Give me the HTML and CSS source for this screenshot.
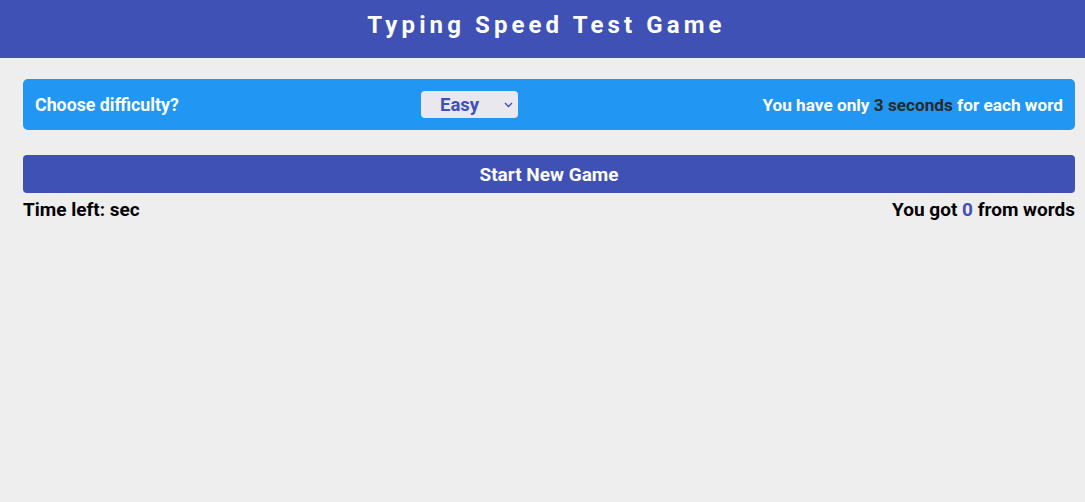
FILE: index.html
```html
<!DOCTYPE html>
<html>
<head>
<meta charset="utf-8">
<link rel="stylesheet" href="styles.css">
</head>
<body>
<header class="top">Typing Speed Test Game</header>
<main class="game">
  <div class="settings">
    <span class="label">Choose difficulty?</span>
    <select class="level">
      <option>Easy</option>
      <option>Normal</option>
      <option>Hard</option>
    </select>
    <span class="message">You have only <span class="secs">3 seconds</span> for each word</span>
  </div>
  <button class="start">Start New Game</button>
  <div class="status">
    <span class="time">Time left: sec</span>
    <span class="score">You got <span class="got">0</span> from words</span>
  </div>
</main>
</body>
</html>
```
FILE: styles.css
```css
* { box-sizing: border-box; }
body {
  margin: 0;
  background: #eeeeee;
  font-family: Roboto, "Liberation Sans", sans-serif;
  font-weight: 700;
}
.top {
  background: #3f51b5;
  color: #fff;
  height: 58px;
  display: flex;
  align-items: center;
  justify-content: center;
  font-size: 24px;
  letter-spacing: 4.1px;
  padding: 0 0 8px 8px;
}
.game {
  padding: 21px 10px 0 23px;
}
.settings {
  background: #2196f3;
  color: #fff;
  border-radius: 5px;
  height: 51px;
  padding: 0 12px;
  display: flex;
  align-items: center;
  justify-content: space-between;
  font-size: 17.2px;
}
.label { font-size: 17.8px; }
.level {
  -webkit-appearance: none;
  appearance: none;
  width: 97px;
  height: 27px;
  border: none;
  border-radius: 4px;
  background: #e8e8ee url("data:image/svg+xml,%3Csvg xmlns='http://www.w3.org/2000/svg' width='9' height='6' viewBox='0 0 9 6'%3E%3Cpath d='M1 1l3.5 3.5L8 1' fill='none' stroke='%233f51b5' stroke-width='1.4'/%3E%3C/svg%3E") no-repeat right 5px center;
  color: #3f51b5;
  font-family: inherit;
  font-weight: 700;
  font-size: 18.5px;
  text-align: center;
  padding: 0 20px 0 0;
  margin-left: -2px;
}
.secs { color: #2a2a2a; }
.start {
  display: block;
  width: 100%;
  margin-top: 25px;
  height: 38px;
  border: none;
  border-radius: 4px;
  background: #3f51b5;
  color: #fff;
  font-family: inherit;
  font-weight: 700;
  font-size: 19px;
}
.status {
  display: flex;
  justify-content: space-between;
  margin-top: 5px;
  font-size: 19px;
  color: #000;
}
.got { color: #3f51b5; }
```
